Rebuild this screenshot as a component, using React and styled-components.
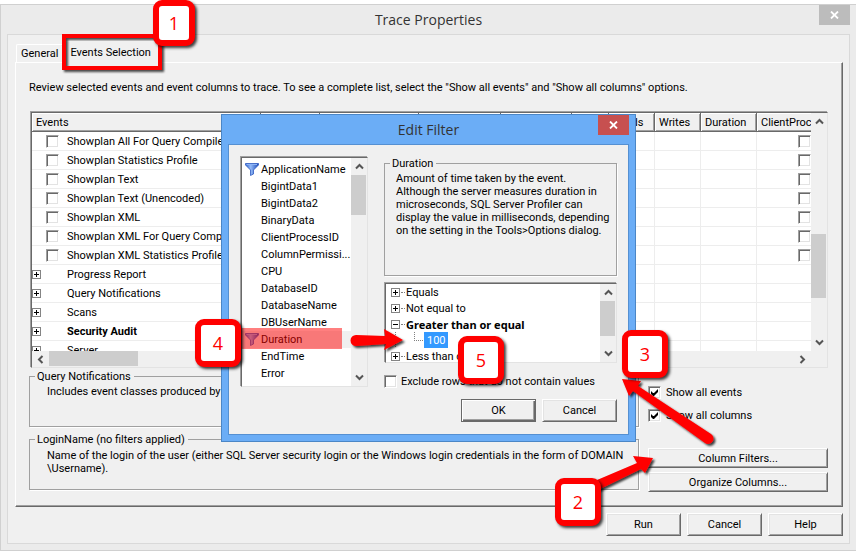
import { useState } from 'react'
import styled, { createGlobalStyle, css } from 'styled-components'

const GlobalStyle = createGlobalStyle`
  * {
    box-sizing: border-box;
  }
  body {
    margin: 0;
    background: #ffffff;
    color: #000000;
    font: 11px/13px Roboto, Arial, sans-serif;
  }
  button, input {
    font: inherit;
    color: inherit;
    margin: 0;
  }
`

// classic bevels
const sunken = css`
  background: #ffffff;
  border: 1px solid;
  border-color: #696969 #e3e3e3 #e3e3e3 #696969;
  box-shadow: -1px -1px 0 #a0a0a0;
`

const Page = styled.div`
  position: relative;
  min-height: 100vh;
  padding-top: 4px;
  display: flex;
`

const Window = styled.main`
  flex: 1;
  min-width: 0;
  display: flex;
  flex-direction: column;
  padding: 0 6px 6px;
  background: #ebebeb;
  border: 1px solid #d0d0d0;
  border-right: none;
`

const TitleBar = styled.header`
  height: 29px;
  display: grid;
  grid-template-columns: 31px 1fr 31px;
  align-items: start;
`

const Title = styled.h1`
  grid-column: 2;
  margin: 0;
  text-align: center;
  font: 14px/29px "Open Sans", "Noto Sans", sans-serif;
  color: #333333;
`

const CloseButton = styled.button`
  height: 20px;
  padding: 0;
  border: none;
  display: flex;
  align-items: center;
  justify-content: center;
  background: ${p => (p.$active ? '#c75050' : '#bcbcbc')};
`

const Client = styled.div`
  flex: 1;
  display: flex;
  flex-direction: column;
  padding: 0 6px 7px 7px;
  background: #f0f0f0;
  border: 1px solid #d9d9d9;
`

const TabStrip = styled.div`
  height: 27px;
  display: flex;
  align-items: flex-end;
  padding-left: 1px;
`

const Tab = styled.button`
  position: relative;
  height: ${p => (p.$active ? 22 : 18)}px;
  margin-bottom: ${p => (p.$active ? -1 : 0)}px;
  padding: 0 4px 1px;
  background: #f0f0f0;
  border: 1px solid;
  border-color: #ffffff #a0a0a0 transparent #ffffff;
  border-bottom: none;
  border-radius: 2px 2px 0 0;
  & + & {
    padding: 0 7px 0 6px;
  }
`

const Panel = styled.section`
  flex: 1;
  display: flex;
  flex-direction: column;
  padding: 18px 14px 14px 13px;
  border: 1px solid;
  border-color: #ffffff #696969 #696969 #ffffff;
  box-shadow: inset -1px -1px 0 #a0a0a0;
`

const Intro = styled.p`
  margin: 0 0 18px;
`

const GridBox = styled.div`
  ${sunken}
  flex: none;
  display: grid;
  grid-template-columns: minmax(0, 1fr) 16px;
  grid-template-rows: 238px 16px;
  margin-left: 2px;
  background: #f0f0f0;
`

const TableClip = styled.div`
  overflow: hidden;
  background: #ffffff;
`

const Table = styled.table`
  width: 820px;
  table-layout: fixed;
  border-collapse: separate;
  border-spacing: 0;
`

const Col = styled.col`
  width: ${p => p.$width}px;
`

const Th = styled.th`
  height: 19px;
  padding: 0 4px;
  text-align: left;
  font-weight: normal;
  overflow: hidden;
  white-space: nowrap;
  background: #f0f0f0;
  border-right: 1px solid #696969;
  border-bottom: 1px solid #696969;
  box-shadow: inset 1px 1px 0 #ffffff, inset -1px -1px 0 #a0a0a0;
`

const Td = styled.td`
  height: 19px;
  padding: 0;
  white-space: nowrap;
  border-right: 1px solid #ededed;
  border-bottom: 1px solid #ededed;
`

const EventCell = styled.div`
  height: 18px;
  display: grid;
  grid-template-columns: 14px 21px 1fr;
  align-items: center;
  font-weight: ${p => (p.$bold ? 'bold' : 'normal')};
`

const Centered = styled.div`
  display: flex;
  justify-content: center;
`

const CheckInput = styled.input.attrs({ type: 'checkbox' })`
  appearance: none;
  flex: none;
  width: 13px;
  height: 13px;
  background: #ffffff;
  border: 1px solid;
  border-color: #a0a0a0 #ffffff #ffffff #a0a0a0;
  box-shadow: inset 1px 1px 0 #696969, inset -1px -1px 0 #e3e3e3;
  &:checked::after {
    content: '';
    display: block;
    width: 7px;
    height: 7px;
    margin: 2px;
    background: #000000;
    clip-path: polygon(0 2px, 2px 4px, 3px 4px, 7px 0, 7px 3px, 3px 7px, 2px 7px, 0 5px);
  }
`

const CheckLabel = styled.label`
  display: flex;
  align-items: center;
  gap: ${p => p.$gap}px;
`

const Expander = styled.button`
  width: 9px;
  height: 9px;
  padding: 0;
  display: block;
  background: #ffffff;
  border: 1px solid #848484;
  svg {
    display: block;
  }
`

const Button = styled.button`
  height: ${p => (p.$wide ? 20 : 23)}px;
  width: ${p => (p.$wide ? '100%' : '75px')};
  padding: 0;
  background: #f0f0f0;
  border: 1px solid;
  border-color: ${p => (p.$primary ? '#696969' : '#ffffff #696969 #696969 #ffffff')};
  box-shadow: ${p =>
    p.$primary
      ? 'inset 1px 1px 0 #ffffff, inset -1px -1px 0 #696969, inset -2px -2px 0 #a0a0a0'
      : 'inset 1px 1px 0 #e3e3e3, inset -1px -1px 0 #a0a0a0'};
`

const Lower = styled.div`
  flex: 1;
  display: flex;
  gap: 9px;
  margin-top: 2px;
`

const Groups = styled.div`
  flex: 1;
  min-width: 0;
  display: flex;
  flex-direction: column;
  gap: 6px;
`

const Group = styled.fieldset`
  min-width: 0;
  height: ${p => p.$height}px;
  margin: 0;
  padding: ${p => p.$top}px 5px 0;
  border: 1px solid #a0a0a0;
  box-shadow: 1px 1px 0 #ffffff;
  legend {
    padding: 0 3px 0 2px;
    line-height: 13px;
  }
  p {
    margin: 0 0 0 ${p => p.$indent}px;
    white-space: nowrap;
  }
`

const Side = styled.div`
  width: 180px;
  padding-top: 16px;
  display: flex;
  flex-direction: column;
  gap: 10px;
`

const SideButtons = styled.div`
  margin-top: auto;
  display: grid;
  gap: 4px;
`

const Footer = styled.footer`
  display: flex;
  justify-content: flex-end;
  gap: 6px;
  margin-top: ${p => p.$top}px;
`

const Bar = styled.div`
  display: flex;
  flex-direction: ${p => (p.$horizontal ? 'row' : 'column')};
  background: #f0f0f0;
`

const BarArrow = styled.button`
  flex: 0 0 17px;
  padding: 0;
  border: none;
  background: none;
  display: flex;
  align-items: center;
  justify-content: center;
  svg {
    transform: rotate(${p => p.$turn}deg);
  }
`

const BarGap = styled.div`
  flex: ${p => p.$size} 1 0;
`

const Thumb = styled.div`
  flex: ${p => p.$size} 1 0;
  margin: ${p => (p.$horizontal ? '0 0 1px' : '0 1px 0 0')};
  background: #cdcdcd;
`

const Dialog = styled.section`
  position: absolute;
  left: 221px;
  top: 114px;
  width: 415px;
  padding: 0 6px 6px;
  background: #6badf6;
  border: 1px solid #4b86c6;
`

const DialogBody = styled.div`
  padding: 12px 11px 12px 12px;
  background: #f0f0f0;
  border: 1px solid #5590d2;
`

const DialogColumns = styled.div`
  display: grid;
  grid-template-columns: 127px minmax(0, 1fr);
  column-gap: 16px;
`

const ListBox = styled.div`
  ${sunken}
  height: 230px;
  display: grid;
  grid-template-columns: minmax(0, 1fr) 16px;
`

const List = styled.ul`
  margin: 0;
  padding: 3px 0 0;
  height: 228px;
  overflow: hidden;
  list-style: none;
`

const ListItem = styled.li`
  height: 17px;
  display: grid;
  grid-template-columns: 19px 1fr;
  align-items: center;
  white-space: nowrap;
  background: ${p => (p.$selected ? '#f0f0f0' : 'none')};
  svg {
    grid-column: 1;
    justify-self: end;
    margin-right: 2px;
  }
  span {
    grid-column: 2;
  }
`

const TreeBox = styled.div`
  ${sunken}
  height: 80px;
  margin: 7px 0 0 1px;
  display: grid;
  grid-template-columns: minmax(0, 1fr) 16px;
`

const Tree = styled.ul`
  margin: 0;
  padding: 0 0 0 5px;
  height: 78px;
  overflow: hidden;
  list-style: none;
`

const TreeRow = styled.li`
  height: 16px;
  display: flex;
  align-items: center;
  white-space: nowrap;
  svg {
    flex: none;
  }
  b {
    font-family: "Noto Sans", sans-serif;
  }
`

const TreeStem = styled.span`
  width: 15px;
  height: 16px;
  display: grid;
  grid-template-columns: 9px 1fr;
  align-items: center;
  &::after {
    content: '';
    width: 4px;
    margin-left: 1px;
    border-top: 1px dotted #808080;
  }
`

const TreeValue = styled.span`
  height: 16px;
  padding: 2px 2px 0 3px;
  background: #3399ff;
  color: #ffffff;
`

const ExcludeRow = styled.div`
  margin: 12px 0 11px;
`

const Overlay = styled.svg`
  position: absolute;
  left: 0;
  top: 0;
  pointer-events: none;
`

const Callout = styled.div`
  position: absolute;
  left: ${p => p.$x}px;
  top: ${p => p.$y}px;
  width: ${p => p.$w || 46}px;
  height: ${p => p.$h || 48}px;
  display: flex;
  align-items: center;
  justify-content: center;
  background: #ffffff;
  border: 6px solid #ff0000;
  border-radius: 9px;
  box-shadow: 2px 2px 3px rgba(0, 0, 0, 0.75);
  color: #ff0000;
  font: 18px/24px "Open Sans", "Noto Sans", sans-serif;
`

const TabMarker = styled.div`
  position: absolute;
  left: 62px;
  top: 34px;
  width: 100px;
  height: 36px;
  border: 4px solid #ff0000;
  filter: drop-shadow(2px 2px 1px rgba(0, 0, 0, 0.7));
`

const RowMarker = styled.div`
  position: absolute;
  left: 240px;
  top: 328px;
  width: 102px;
  height: 21px;
  background: rgba(255, 0, 0, 0.5);
`

const columns = [
  ['Events', 229],
  ['TextData', 59],
  ['ApplicationName', 99],
  ['NTUserName', 82],
  ['LoginName', 71],
  ['CPU', 37],
  ['Reads', 46],
  ['Writes', 46],
  ['Duration', 56],
  ['ClientProcessID', 95],
]

const events = [
  { name: 'Showplan All For Query Compile' },
  { name: 'Showplan Statistics Profile' },
  { name: 'Showplan Text' },
  { name: 'Showplan Text (Unencoded)' },
  { name: 'Showplan XML' },
  { name: 'Showplan XML For Query Compile' },
  { name: 'Showplan XML Statistics Profile' },
  { name: 'Progress Report', group: true },
  { name: 'Query Notifications', group: true },
  { name: 'Scans', group: true },
  { name: 'Security Audit', group: true, bold: true },
  { name: 'Server', group: true },
]

const filters = [
  { name: 'ApplicationName', filtered: true },
  { name: 'BigintData1' },
  { name: 'BigintData2' },
  { name: 'BinaryData' },
  { name: 'ClientProcessID' },
  { name: 'ColumnPermissi...' },
  { name: 'CPU' },
  { name: 'DatabaseID' },
  { name: 'DatabaseName' },
  { name: 'DBUserName' },
  { name: 'Duration', filtered: true, selected: true },
  { name: 'EndTime' },
  { name: 'Error' },
  { name: 'EventSubClass' },
]

const CloseIcon = () => (
  <svg width="9" height="8" viewBox="0 0 9 8">
    <path d="M1 0.5L8 7.5M8 0.5L1 7.5" stroke="#fff" strokeWidth="1.8" />
  </svg>
)

const Funnel = () => (
  <svg width="14" height="13" viewBox="0 0 14 13">
    <defs>
      <linearGradient id="funnel" x1="0" x2="1">
        <stop offset="0" stopColor="#2f62d0" />
        <stop offset="0.4" stopColor="#94bbf8" />
        <stop offset="1" stopColor="#1a49b8" />
      </linearGradient>
    </defs>
    <path d="M0.5 0.5H13.5V2L8.5 7V11L5.5 12.5V7L0.5 2Z" fill="url(#funnel)" stroke="#2d5bc0" strokeWidth="0.8" />
    <path d="M1.5 1.5H12" stroke="#8db4f5" />
  </svg>
)

function Toggle({ open, label }) {
  return (
    <Expander aria-label={label} aria-expanded={!!open}>
      <svg width="7" height="7" viewBox="0 0 7 7" shapeRendering="crispEdges">
        <path d={open ? 'M1 3.5H6' : 'M1 3.5H6M3.5 1V6'} stroke="#000" />
      </svg>
    </Expander>
  )
}

function ScrollBar({ horizontal, before, size, after }) {
  const arrow = (
    <svg width="9" height="7" viewBox="0 0 9 7">
      <path d="M1 5.5L4.5 2L8 5.5" fill="none" stroke="#555" strokeWidth="2" />
    </svg>
  )
  return (
    <Bar $horizontal={horizontal}>
      <BarArrow $turn={horizontal ? -90 : 0} aria-label="Scroll back">{arrow}</BarArrow>
      <BarGap $size={before} />
      <Thumb $size={size} $horizontal={horizontal} />
      <BarGap $size={after} />
      <BarArrow $turn={horizontal ? 90 : 180} aria-label="Scroll forward">{arrow}</BarArrow>
    </Bar>
  )
}

function TreeNode({ label, open }) {
  return (
    <TreeRow>
      <TreeStem>
        <Toggle open={open} label={label} />
      </TreeStem>
      {open ? <b>{label}</b> : label}
    </TreeRow>
  )
}

function EventGrid() {
  return (
    <GridBox>
      <TableClip>
        <Table>
          <colgroup>
            {columns.map(([name, width]) => <Col key={name} $width={width} />)}
          </colgroup>
          <thead>
            <tr>{columns.map(([name]) => <Th key={name}>{name}</Th>)}</tr>
          </thead>
          <tbody>
            {events.map(event => (
              <tr key={event.name}>
                <Td>
                  <EventCell $bold={event.bold}>
                    {event.group ? <Toggle label={event.name} /> : <span />}
                    {event.group ? <span /> : <CheckInput aria-label={event.name} />}
                    <span>{event.name}</span>
                  </EventCell>
                </Td>
                {columns.slice(1, -1).map(([name]) => <Td key={name} />)}
                <Td>
                  {!event.group && (
                    <Centered>
                      <CheckInput aria-label={`${event.name} ClientProcessID`} />
                    </Centered>
                  )}
                </Td>
              </tr>
            ))}
          </tbody>
        </Table>
      </TableClip>
      <ScrollBar before={104} size={64} after={36} />
      <ScrollBar horizontal before={0} size={89} after={656} />
    </GridBox>
  )
}

function EditFilter() {
  const [exclude, setExclude] = useState(false)

  return (
    <Dialog role="dialog" aria-label="Edit Filter">
      <TitleBar>
        <Title as="h2">Edit Filter</Title>
        <CloseButton $active aria-label="Close filter"><CloseIcon /></CloseButton>
      </TitleBar>
      <DialogBody>
        <DialogColumns>
          <ListBox>
            <List role="listbox" aria-label="Columns">
              {filters.map(f => (
                <ListItem key={f.name} role="option" aria-selected={!!f.selected} $selected={f.selected}>
                  {f.filtered && <Funnel />}
                  <span>{f.name}</span>
                </ListItem>
              ))}
            </List>
            <ScrollBar before={0} size={40} after={154} />
          </ListBox>
          <div>
            <Group $height={119} $top={2} $indent={6}>
              <legend>Duration</legend>
              <p>
                Amount of time taken by the event.<br />
                Although the server measures duration in<br />
                microseconds, SQL Server Profiler can<br />
                display the value in milliseconds, depending<br />
                on the setting in the Tools&gt;Options dialog.
              </p>
            </Group>
            <TreeBox>
              <Tree>
                <TreeNode label="Equals" />
                <TreeNode label="Not equal to" />
                <TreeNode label="Greater than or equal" open />
                <TreeRow>
                  <svg width="33" height="16" shapeRendering="crispEdges">
                    <path d="M4.5 0V16M23.5 0V8.5H33" fill="none" stroke="#808080" strokeDasharray="1 1" />
                  </svg>
                  <TreeValue>100</TreeValue>
                </TreeRow>
                <TreeNode label="Less than or equal" />
              </Tree>
              <ScrollBar before={0} size={34} after={9} />
            </TreeBox>
            <ExcludeRow>
              <CheckLabel $gap={4}>
                <CheckInput checked={exclude} onChange={e => setExclude(e.target.checked)} />
                Exclude rows that do not contain values
              </CheckLabel>
            </ExcludeRow>
          </div>
        </DialogColumns>
        <Footer $top={0}>
          <Button $primary>OK</Button>
          <Button>Cancel</Button>
        </Footer>
      </DialogBody>
    </Dialog>
  )
}

function Arrows() {
  return (
    <Overlay width="856" height="551" viewBox="0 0 856 551">
      <defs>
        <filter id="shade" x="-20%" y="-20%" width="150%" height="150%">
          <feDropShadow dx="2" dy="2" stdDeviation="1.2" floodOpacity="0.75" />
        </filter>
      </defs>
      <g fill="#ff0000">
        <path
          filter="url(#shade)"
          d="M356 335L385 336L384 329L403 340L384 350L386 344L356 346A5 5 0 0 1 356 335Z"
        />
        <path
          filter="url(#shade)"
          d="M590 483L637 463L633 456L653 458L645 473L641 469L596 491Z"
        />
        <path
          filter="url(#shade)"
          d="M622 379L641 381L638 386L711 434A5 5 0 0 1 705 443L633 391L629 396Z"
        />
      </g>
    </Overlay>
  )
}

export default function App() {
  const [showEvents, setShowEvents] = useState(true)
  const [showColumns, setShowColumns] = useState(true)

  return (
    <Page>
      <GlobalStyle />
      <Window>
        <TitleBar>
          <Title>Trace Properties</Title>
          <CloseButton aria-label="Close"><CloseIcon /></CloseButton>
        </TitleBar>
        <Client>
          <TabStrip role="tablist">
            <Tab role="tab">General</Tab>
            <Tab role="tab" aria-selected $active>Events Selection</Tab>
          </TabStrip>
          <Panel>
            <Intro>
              Review selected events and event columns to trace. To see a complete list, select the "Show all events" and
              "Show all columns" options.
            </Intro>
            <EventGrid />
            <Lower>
              <Groups>
                <Group $height={57} $top={2} $indent={12}>
                  <legend>Query Notifications</legend>
                  <p>Includes event classes produced by query notifications.</p>
                </Group>
                <Group $height={57} $top={3} $indent={12}>
                  <legend>LoginName (no filters applied)</legend>
                  <p>
                    Name of the login of the user (either SQL Server security login or the Windows login credentials in
                    the form of DOMAIN<br />
                    \Username).
                  </p>
                </Group>
              </Groups>
              <Side>
                <CheckLabel $gap={5}>
                  <CheckInput checked={showEvents} onChange={e => setShowEvents(e.target.checked)} />
                  Show all events
                </CheckLabel>
                <CheckLabel $gap={5}>
                  <CheckInput checked={showColumns} onChange={e => setShowColumns(e.target.checked)} />
                  Show all columns
                </CheckLabel>
                <SideButtons>
                  <Button $wide>Column Filters...</Button>
                  <Button $wide>Organize Columns...</Button>
                </SideButtons>
              </Side>
            </Lower>
          </Panel>
          <Footer $top={6}>
            <Button>Run</Button>
            <Button>Cancel</Button>
            <Button>Help</Button>
          </Footer>
        </Client>
      </Window>
      <EditFilter />
      <TabMarker />
      <RowMarker />
      <Arrows />
      <Callout $x={153} $y={0} $w={42} $h={46}>1</Callout>
      <Callout $x={555} $y={478}>2</Callout>
      <Callout $x={622} $y={330}>3</Callout>
      <Callout $x={195} $y={319}>4</Callout>
      <Callout $x={458} $y={336}>5</Callout>
    </Page>
  )
}
